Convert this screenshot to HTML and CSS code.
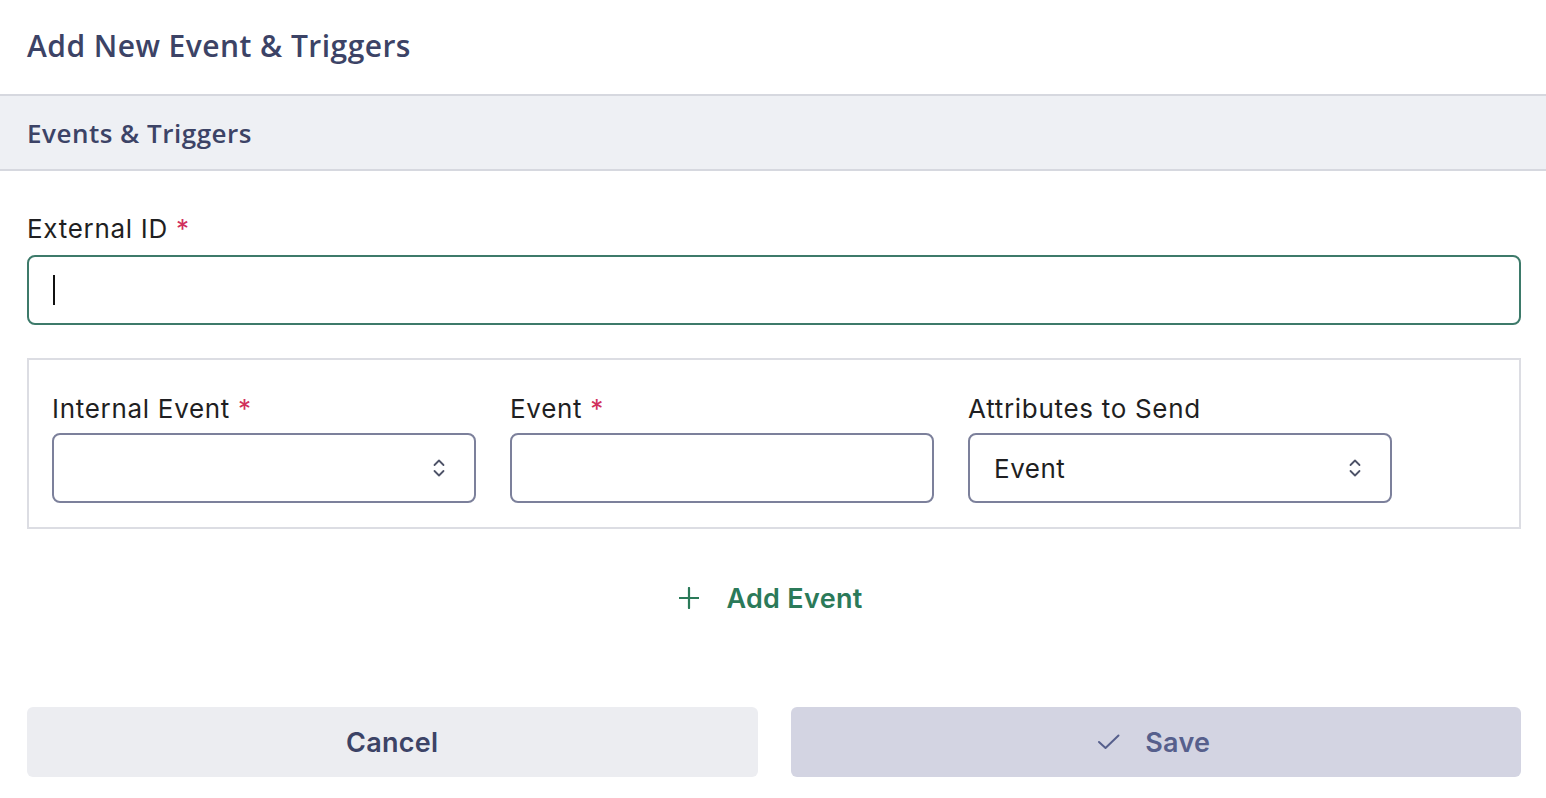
FILE: index.html
```html
<!DOCTYPE html>
<html>
<head>
<meta charset="utf-8">
<link rel="stylesheet" href="styles.css">
</head>
<body>
<div class="header"><h1 class="title">Add New Event &amp; Triggers</h1></div>
<div class="band"><h2 class="band-title">Events &amp; Triggers</h2></div>
<div class="content">
  <div class="field">
    <div class="label">External ID <span class="req">*</span></div>
    <div class="input focus"><span class="caret"></span></div>
  </div>
  <div class="card">
    <div class="col">
      <div class="label">Internal Event <span class="req">*</span></div>
      <div class="input select">
        <span class="value"></span>
        <svg class="chev" width="14" height="24" viewBox="0 0 14 24"><path d="M2.5 9 L7 4.5 L11.5 9 M2.5 15 L7 19.5 L11.5 15" fill="none" stroke="#4e5368" stroke-width="1.8" stroke-linecap="round" stroke-linejoin="round"/></svg>
      </div>
    </div>
    <div class="col">
      <div class="label">Event <span class="req">*</span></div>
      <div class="input"></div>
    </div>
    <div class="col">
      <div class="label">Attributes to Send</div>
      <div class="input select">
        <span class="value">Event</span>
        <svg class="chev" width="14" height="24" viewBox="0 0 14 24"><path d="M2.5 9 L7 4.5 L11.5 9 M2.5 15 L7 19.5 L11.5 15" fill="none" stroke="#4e5368" stroke-width="1.8" stroke-linecap="round" stroke-linejoin="round"/></svg>
      </div>
    </div>
  </div>
  <div class="add-row">
    <div class="add">
      <svg width="20" height="22" viewBox="0 0 20 22"><path d="M10 1 V21 M0.5 11 H19.5" stroke="#2b7a59" stroke-width="2.2" stroke-linecap="round"/></svg>
      <span>Add Event</span>
    </div>
  </div>
  <div class="actions">
    <div class="btn cancel">Cancel</div>
    <div class="btn save">
      <svg width="24" height="18" viewBox="0 0 24 18"><path d="M2 9 L8.5 15 L21.5 2.5" fill="none" stroke="#565f8c" stroke-width="2" stroke-linecap="round" stroke-linejoin="round"/></svg>
      <span>Save</span>
    </div>
  </div>
</div>
</body>
</html>
```
FILE: styles.css
```css
* { box-sizing: border-box; }
html, body { margin: 0; padding: 0; background: #fff; }
body { font-family: Inter, "Liberation Sans", sans-serif; color: #1f1f22; }

.header {
  height: 96px;
  padding-left: 27px;
  display: flex;
  align-items: center;
  border-bottom: 2px solid #d6d8df;
}
.title {
  margin: 0;
  font-family: "Open Sans", "Noto Sans", sans-serif;
  font-weight: 600;
  font-size: 30px;
  letter-spacing: 0.45px;
  color: #3c4366;
  position: relative;
  top: -2px;
}
.band {
  height: 75px;
  padding-left: 27px;
  display: flex;
  align-items: center;
  background: #eef0f4;
  border-bottom: 2px solid #d6d8df;
}
.band-title {
  margin: 0;
  font-family: "Open Sans", "Noto Sans", sans-serif;
  font-weight: 600;
  font-size: 26px;
  letter-spacing: 0.5px;
  color: #3c4366;
}
.content { padding: 42px 25px 0 27px; }

.label {
  font-size: 26px;
  line-height: 32px;
  font-weight: 400;
  letter-spacing: 0.7px;
  color: #1f1f22;
  margin-bottom: 8px;
  white-space: nowrap;
}
.req { color: #d1305c; }

.input {
  height: 70px;
  border: 2px solid #7c809b;
  border-radius: 8px;
  background: #fff;
  display: flex;
  align-items: center;
  padding: 0 24px;
}
.input.focus { border-color: #3d7a6a; }
.field .label { margin-bottom: 10px; }
.caret { width: 2px; height: 30px; background: #111; }

.card {
  margin-top: 33px;
  border: 2px solid #dcdde3;
  padding: 33px 24px 24px 23px;
  display: grid;
  grid-template-columns: 424px 424px 424px;
  column-gap: 34px;
}
.select { justify-content: space-between; padding-right: 28px; }
.value { font-size: 26px; letter-spacing: 0.5px; color: #1f1f22; }
.chev { display: block; }

.add-row { display: flex; justify-content: center; margin-top: 49px; padding-right: 6px; }
.add {
  display: flex;
  align-items: center;
  gap: 27px;
  height: 40px;
  color: #2b7a59;
  font-weight: 600;
  font-size: 27px;
  letter-spacing: 0.3px;
}
.add svg { display: block; }

.actions {
  margin-top: 89px;
  display: grid;
  grid-template-columns: 1fr 1fr;
  column-gap: 33px;
}
.btn {
  height: 70px;
  border-radius: 6px;
  display: flex;
  align-items: center;
  justify-content: center;
  font-size: 27px;
  font-weight: 600;
  letter-spacing: 0.3px;
}
.cancel { background: #ecedf1; color: #3c4366; }
.save { background: #d3d4e2; color: #565f8c; gap: 24px; padding-right: 4px; }
.save svg { display: block; }
```
